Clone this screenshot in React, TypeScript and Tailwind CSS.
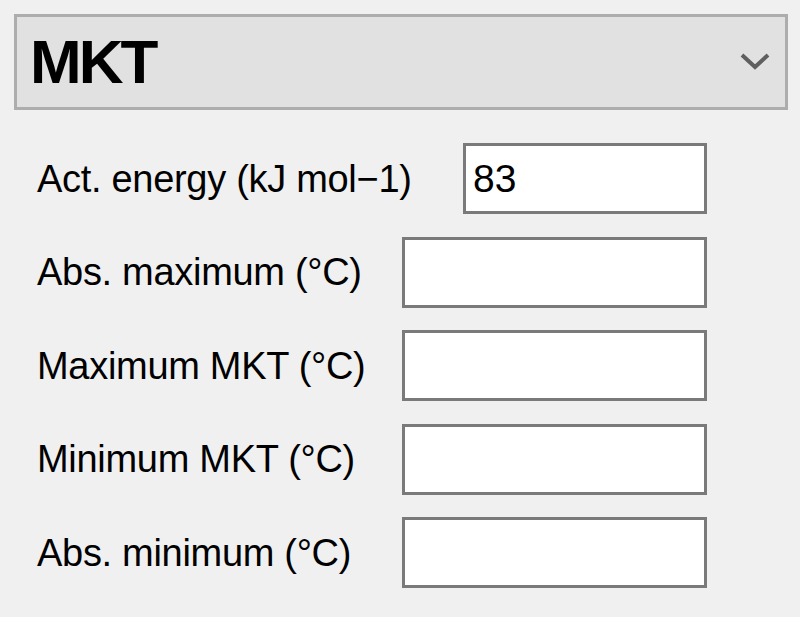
import React from "react";

const rows = [
  { label: "Act. energy (kJ mol−1)", value: "83", wide: false },
  { label: "Abs. maximum (°C)", value: "", wide: true },
  { label: "Maximum MKT (°C)", value: "", wide: true },
  { label: "Minimum MKT (°C)", value: "", wide: true },
  { label: "Abs. minimum (°C)", value: "", wide: true },
];

export default function App() {
  return (
    <div className="w-[800px] h-[617px] bg-[#f0f0f0] overflow-hidden font-['Liberation_Sans',Arial,sans-serif] text-black">
      <div className="pt-[14px] pl-[14px]">
        <div className="flex items-center w-[774px] h-[96px] border-[3px] border-[#adadad] bg-[#e1e1e1] pl-[13px] pr-[14px]">
          <span className="text-[62px] font-bold tracking-[-3px] leading-none">MKT</span>
          <svg className="ml-auto" width="32" height="22" viewBox="0 0 32 22">
            <path d="M3 4 L16 16 L29 4" fill="none" stroke="#5f5f5f" strokeWidth="4" />
          </svg>
        </div>
      </div>
      <div className="flex flex-col gap-[22.5px] pt-[33px] pl-[37px] w-[707px]">
        {rows.map((r) => (
          <div key={r.label} className="flex items-center">
            <span className="text-[38px] leading-none tracking-[-0.3px]">{r.label}</span>
            <div
              className={`ml-auto flex items-center h-[71px] border-[3px] border-[#7a7a7a] bg-white pl-[7px] ${
                r.wide ? "w-[305px]" : "w-[244px]"
              }`}
            >
              <span className="text-[39px] leading-none">{r.value}</span>
            </div>
          </div>
        ))}
      </div>
    </div>
  );
}
